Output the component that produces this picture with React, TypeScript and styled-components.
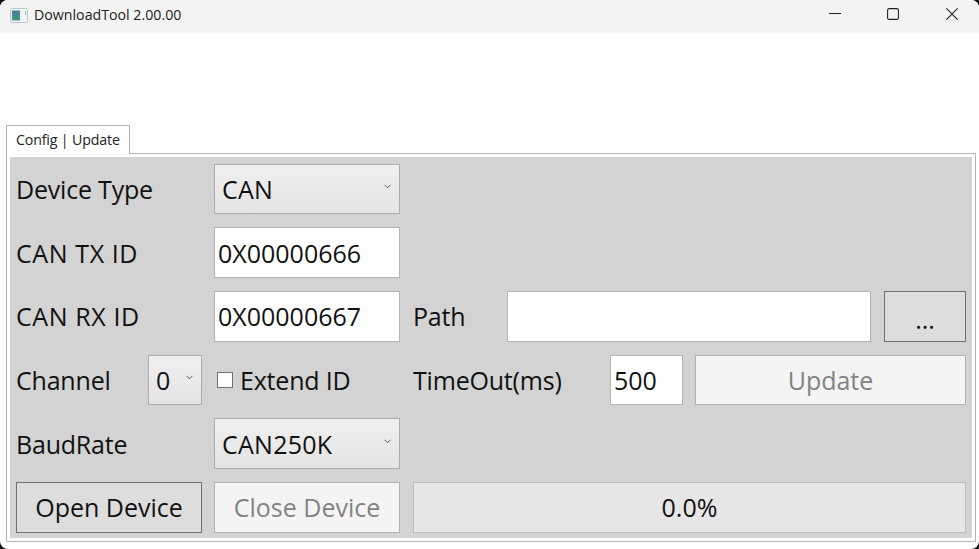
import React from "react";
import styled, { createGlobalStyle } from "styled-components";

const Global = createGlobalStyle`
  html, body { margin: 0; padding: 0; background: #111; overflow: hidden; }
  #root { width: 979px; height: 549px; }
  * { box-sizing: border-box; }
`;

const Window = styled.div`
  width: 979px;
  height: 549px;
  background: #fff;
  border-radius: 8px;
  overflow: hidden;
  display: flex;
  flex-direction: column;
  font-family: "Open Sans", "Noto Sans", sans-serif;
  color: #111;
`;

const TitleBar = styled.div`
  height: 33px;
  flex: none;
  background: #f3f3f3;
  display: flex;
  align-items: center;
  padding-left: 10px;
`;

const AppIcon = styled.svg`
  width: 18px;
  height: 15px;
  flex: none;
  margin-top: -3px;
`;

const TitleText = styled.span`
  margin-left: 6px;
  font-size: 14.2px;
  margin-top: -5px;
  color: #222;
`;

const WindowButtons = styled.div`
  margin-left: auto;
  margin-right: -2px;
  display: flex;
  height: 100%;
`;

const WindowButton = styled.div`
  width: 58.5px;
  display: flex;
  align-items: center;
  justify-content: center;
  padding-bottom: 6px;
`;

const TabArea = styled.div`
  margin: 92px 3px 0 6px;
  flex: 1;
  display: flex;
  flex-direction: column;
  min-height: 0;
`;

const Tab = styled.div`
  width: 124px;
  height: 29px;
  background: #fff;
  border: 1px solid #b4b4b4;
  border-bottom: none;
  font-size: 14.2px;
  letter-spacing: -0.15px;
  padding: 4px 0 0 9px;
  margin-bottom: -1px;
  position: relative;
  z-index: 1;
  color: #222;
`;

const TabBody = styled.div`
  height: 389px;
  border: 1px solid #b4b4b4;
  background: #fff;
  padding: 3px;
`;

const Panel = styled.div`
  height: 381px;
  background: #d3d3d3;
  padding: 6.6px 0 0 6px;
  display: grid;
  grid-template-columns: 132px 54px 12px 186px 13px 94px 103px 73px 12px 176px 13px 82px;
  grid-template-rows: repeat(6, 50.7px);
  row-gap: 13px;
`;

const Cell = styled.div<{ $col: string; $row: number }>`
  grid-column: ${(p) => p.$col};
  grid-row: ${(p) => p.$row};
  min-width: 0;
`;

const Label = styled(Cell)<{ $spread?: boolean }>`
  display: flex;
  align-items: center;
  font-size: 25px;
  letter-spacing: ${(p) => (p.$spread ? "0.6px" : "-0.2px")};
  white-space: nowrap;
`;

const Combo = styled(Cell)`
  display: flex;
  align-items: center;
  justify-content: space-between;
  padding: 0 8px 0 7px;
  font-size: 25px;
  letter-spacing: 0.25px;
  background: linear-gradient(#f0f0f0, #e4e4e4);
  border: 1px solid #acacac;
`;

const Chevron = styled.svg`
  width: 7px;
  height: 5px;
  flex: none;
  margin-top: -5px;
`;

const Input = styled(Cell)`
  display: flex;
  align-items: center;
  padding: 0 3px;
  font-size: 25px;
  background: #fff;
  border: 1px solid #b4b4b4;
`;

const Button = styled(Cell)<{ $disabled?: boolean; $dots?: boolean }>`
  display: flex;
  align-items: center;
  justify-content: center;
  padding-top: ${(p) => (p.$dots ? "6px" : "0")};
  font-size: 25px;
  background: ${(p) => (p.$disabled ? "#f4f4f4" : "#dddddd")};
  border: 1px solid ${(p) => (p.$disabled ? "#adb2b5" : "#707070")};
  color: ${(p) => (p.$disabled ? "#838383" : "#111")};
  white-space: nowrap;
`;

const Progress = styled(Cell)`
  display: flex;
  align-items: center;
  justify-content: center;
  font-size: 25px;
  background: #e6e6e6;
  border: 1px solid #bcbcbc;
`;

const CheckRow = styled(Cell)`
  display: flex;
  align-items: center;
  padding-left: 15px;
  font-size: 25px;
  letter-spacing: -0.2px;
  white-space: nowrap;
`;

const CheckBox = styled.span`
  width: 16px;
  height: 16px;
  background: #fff;
  border: 1px solid #707070;
  margin-right: 7px;
  flex: none;
`;

const Chev = () => (
  <Chevron viewBox="0 0 7 5" fill="none">
    <path d="M0.5 0.8 L3.5 3.8 L6.5 0.8" stroke="#555" strokeWidth="1" />
  </Chevron>
);

export default function App() {
  return (
    <Window>
      <Global />
      <TitleBar>
        <AppIcon viewBox="0 0 18 15">
          <defs>
            <linearGradient id="appIconFill" x1="0" y1="0" x2="0" y2="1">
              <stop offset="0" stopColor="#4a7f96" />
              <stop offset="1" stopColor="#3f9a82" />
            </linearGradient>
          </defs>
          <rect x="0.5" y="0.5" width="17" height="14" rx="1" fill="#f2f5f6" stroke="#bcc4c8" />
          <rect x="2" y="2.5" width="8" height="10" fill="url(#appIconFill)" />
          <rect x="15" y="3" width="1" height="4" fill="#9ab" />
        </AppIcon>
        <TitleText>DownloadTool 2.00.00</TitleText>
        <WindowButtons>
          <WindowButton>
            <svg width="12" height="1" viewBox="0 0 12 1"><rect width="12" height="1" fill="#222" /></svg>
          </WindowButton>
          <WindowButton>
            <svg width="12" height="12" viewBox="0 0 12 12" fill="none"><rect x="0.6" y="0.6" width="10.8" height="10.8" rx="1.5" stroke="#222" strokeWidth="1.1" /></svg>
          </WindowButton>
          <WindowButton>
            <svg width="12" height="12" viewBox="0 0 12 12" fill="none"><path d="M0.4 0.4 L11.6 11.6 M11.6 0.4 L0.4 11.6" stroke="#222" strokeWidth="1.1" /></svg>
          </WindowButton>
        </WindowButtons>
      </TitleBar>
      <TabArea>
        <Tab>Config | Update</Tab>
        <TabBody>
          <Panel>
            <Label $col="1 / 4" $row={1}>Device Type</Label>
            <Combo $col="4" $row={1}>CAN<Chev /></Combo>

            <Label $col="1 / 4" $row={2} $spread>CAN TX ID</Label>
            <Input $col="4" $row={2}>0X00000666</Input>

            <Label $col="1 / 4" $row={3} $spread>CAN RX ID</Label>
            <Input $col="4" $row={3}>0X00000667</Input>
            <Label $col="6" $row={3}>Path</Label>
            <Input $col="7 / 11" $row={3} />
            <Button $col="12" $row={3} $dots>...</Button>

            <Label $col="1" $row={4}>Channel</Label>
            <Combo $col="2" $row={4}>0<Chev /></Combo>
            <CheckRow $col="3 / 5" $row={4}><CheckBox />Extend ID</CheckRow>
            <Label $col="6 / 8" $row={4}>TimeOut(ms)</Label>
            <Input $col="8" $row={4}>500</Input>
            <Button $col="10 / 13" $row={4} $disabled>Update</Button>

            <Label $col="1 / 4" $row={5}>BaudRate</Label>
            <Combo $col="4" $row={5}>CAN250K<Chev /></Combo>

            <Button $col="1 / 3" $row={6}>Open Device</Button>
            <Button $col="4" $row={6} $disabled>Close Device</Button>
            <Progress $col="6 / 13" $row={6}>0.0%</Progress>
          </Panel>
        </TabBody>
      </TabArea>
    </Window>
  );
}
